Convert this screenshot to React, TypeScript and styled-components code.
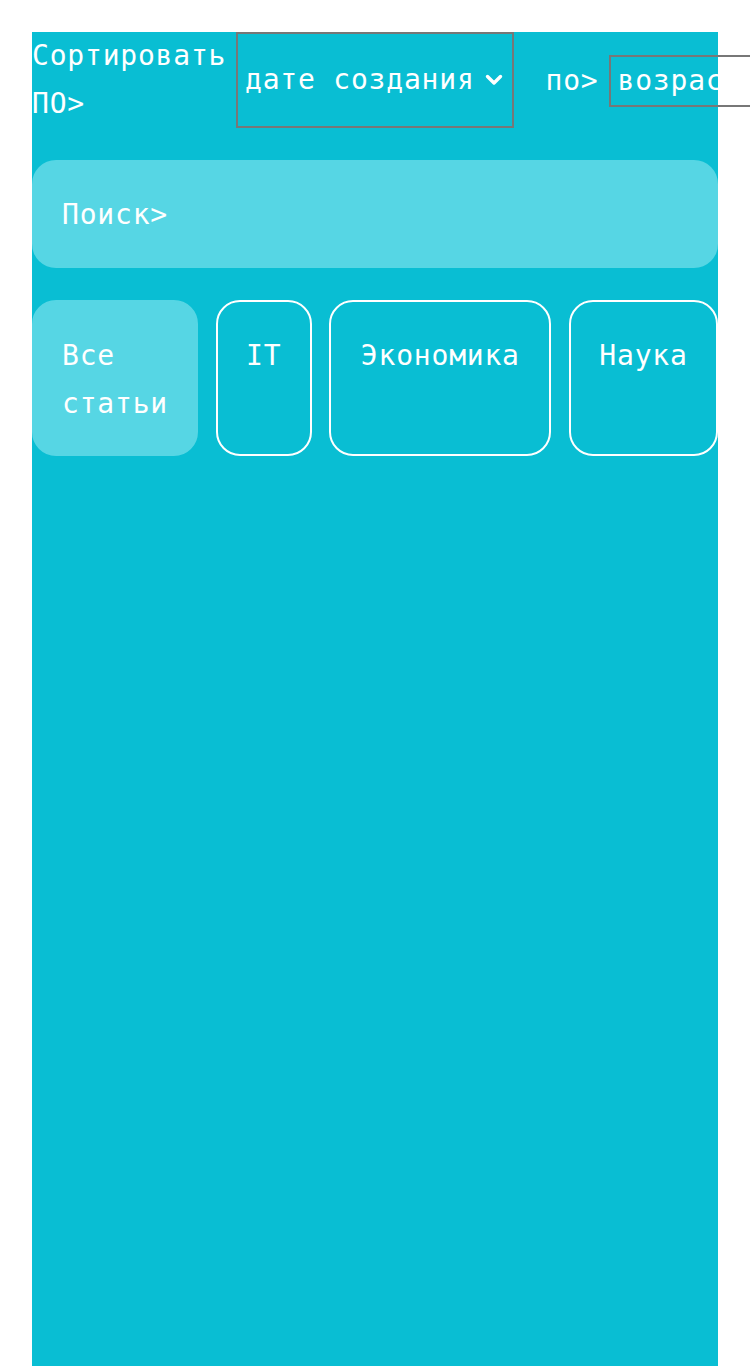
import React from "react";
import styled, { createGlobalStyle } from "styled-components";

const Global = createGlobalStyle`
  html, body { margin: 0; padding: 0; background: #ffffff; }
  body { font-family: "DejaVu Sans Mono", monospace; overflow-x: hidden; }
`;

const Page = styled.div`
  margin: 32px 32px 0;
  min-height: calc(100vh - 32px);
  background: #09bed3;
  color: #ffffff;
  font-family: "DejaVu Sans Mono", monospace;
  font-size: 28px;
  letter-spacing: 0.8px;
  line-height: 48px;
`;

const Header = styled.div`
  display: flex;
  align-items: stretch;
  padding-top: 1px;
`;

const SortLabel = styled.div`
  flex: 0 0 204px;
  margin-top: -1px;
`;

const Select = styled.div<{ $centered?: boolean }>`
  flex: 0 0 auto;
  display: flex;
  align-items: center;
  gap: 10px;
  box-sizing: border-box;
  border: 2px solid #777777;
  padding: 0 9px 0 7px;
  white-space: nowrap;
  align-self: ${(p) => (p.$centered ? "center" : "stretch")};
  margin-top: ${(p) => (p.$centered ? "0" : "-1px")};
`;

const ByLabel = styled.div`
  flex: 0 0 auto;
  align-self: center;
  margin: 0 10px 0 32px;
  white-space: nowrap;
`;

const Search = styled.div`
  margin-top: 32px;
  padding: 31px 30px 29px;
  background: #56d6e4;
  border-radius: 24px;
`;

const Chips = styled.div`
  margin-top: 32px;
  display: flex;
  gap: 17.67px;
`;

const Chip = styled.div<{ $active?: boolean; $w: number }>`
  flex: 0 0 ${(p) => p.$w}px;
  box-sizing: border-box;
  padding: 30px 28px 26px;
  border-radius: 24px;
  border: 2px solid ${(p) => (p.$active ? "#56d6e4" : "#ffffff")};
  background: ${(p) => (p.$active ? "#56d6e4" : "transparent")};
  text-align: ${(p) => (p.$active ? "left" : "center")};
  min-height: 156px;
`;

const Chevron = () => (
  <svg width="18" height="12" viewBox="0 0 18 12" style={{ flex: "0 0 auto" }}>
    <path d="M2.5 2.5 L9 9 L15.5 2.5" fill="none" stroke="#ffffff" strokeWidth="3.4" strokeLinecap="round" strokeLinejoin="round" />
  </svg>
);

export default function App() {
  return (
    <>
      <Global />
      <Page>
        <Header>
          <SortLabel>Сортировать ПО&gt;</SortLabel>
          <Select>
            <span>дате создания</span>
            <Chevron />
          </Select>
          <ByLabel>по&gt;</ByLabel>
          <Select $centered>
            <span>возрастанию</span>
            <Chevron />
          </Select>
        </Header>
        <Search>Поиск&gt;</Search>
        <Chips>
          <Chip $active $w={166}>Все статьи</Chip>
          <Chip $w={96}>IT</Chip>
          <Chip $w={222}>Экономика</Chip>
          <Chip $w={149}>Наука</Chip>
        </Chips>
      </Page>
    </>
  );
}
